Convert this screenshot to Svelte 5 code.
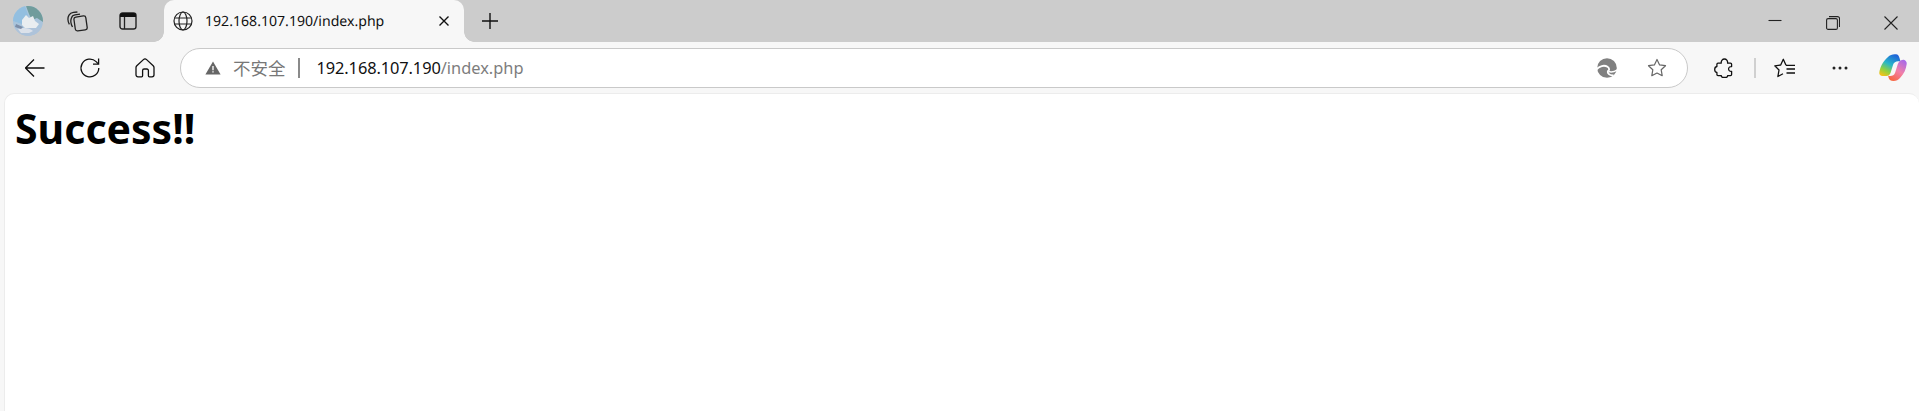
<script>
  const host = "192.168.107.190";
  const path = "/index.php";
</script>

<div class="window">
  <div class="tabstrip">
    <button class="avatar" aria-label="Profile">
      <svg width="30" height="30" viewBox="0 0 30 30">
        <defs>
          <clipPath id="av"><circle cx="15" cy="15" r="15" /></clipPath>
          <filter id="soft"><feGaussianBlur stdDeviation="0.7" /></filter>
        </defs>
        <g clip-path="url(#av)">
          <rect width="30" height="30" fill="#a9c4dc" />
          <g filter="url(#soft)">
            <path d="M0 0h12l3 9-6 9-9-3z" fill="#93bfe0" />
            <path d="M13 0h17v16l-6-4-5 2-3-6z" fill="#6f9c9c" />
            <path d="M9 14l4-5 3 3 4-2 2 5 4 3-3 4H12l-3-3z" fill="#e9edf0" />
            <path d="M0 22h30v8H0z" fill="#aec3da" />
            <path d="M5 23c5-2 12-1 15 2l-4 2H8z" fill="#dbe1ea" />
            <path d="M3 18l7 3-2 2-6-2z" fill="#7d8ea8" />
          </g>
        </g>
      </svg>
    </button>
    <button class="strip-btn first" aria-label="Workspaces">
      <svg width="22" height="22" viewBox="0 0 22 22" fill="none" stroke="#222" stroke-width="1.3">
        <rect x="8.500" y="6.500" width="12" height="14" rx="2.200" transform="rotate(-8 14 13)" />
        <path d="M6.500 17C4.800 14 4.400 10.500 5.400 8 6 6 7.400 5 9 4.800l5-.7" />
        <path d="M3.400 14.400C1.600 11 1.600 7.600 3 5.200 4 3.400 5.600 2.600 7.400 2.400l4-.4" />
      </svg>
    </button>
    <button class="strip-btn second" aria-label="Vertical tabs">
      <svg width="18" height="18" viewBox="0 0 18 18" fill="none">
        <rect x="1" y="1" width="16" height="16" rx="2.600" stroke="#222" stroke-width="1.400" />
        <path d="M1 3.600A2.600 2.600 0 0 1 3.600 1h10.800A2.600 2.600 0 0 1 17 3.600V5H1z" fill="#111" />
        <path d="M5.500 5v12" stroke="#222" stroke-width="1.300" />
      </svg>
    </button>
    <div class="tab">
      <svg class="globe" width="20" height="20" viewBox="0 0 20 20" fill="none" stroke="#222" stroke-width="1.200">
        <circle cx="10" cy="10" r="9" />
        <ellipse cx="10" cy="10" rx="4" ry="9" />
        <path d="M1.600 7h16.800M1.600 13h16.800" />
      </svg>
      <span class="tab-title">{host}{path}</span>
      <svg class="tab-close" width="12" height="12" viewBox="0 0 12 12" stroke="#111" stroke-width="1.400" fill="none">
        <path d="M1.500 1.500l9 9M10.500 1.500l-9 9" />
      </svg>
    </div>
    <button class="strip-btn plus" aria-label="New tab">
      <svg width="18" height="18" viewBox="0 0 18 18" stroke="#111" stroke-width="1.400" fill="none">
        <path d="M9 1v16M1 9h16" />
      </svg>
    </button>
    <div class="caption">
      <svg width="14" height="14" viewBox="0 0 14 14" stroke="#222" stroke-width="1.100" fill="none">
        <path d="M0.500 6.500h13" />
      </svg>
      <svg class="restore" width="14" height="14" viewBox="0 0 14 14" stroke="#222" stroke-width="1.100" fill="none">
        <rect x="0.600" y="2.600" width="10.800" height="10.800" rx="1.500" />
        <path d="M3 0.600h8.500a2 2 0 0 1 2 2V11" />
      </svg>
      <svg class="restore" width="14" height="14" viewBox="0 0 14 14" stroke="#222" stroke-width="1.100" fill="none">
        <path d="M0.500 0.500l13 13M13.500 0.500l-13 13" />
      </svg>
    </div>
  </div>

  <div class="toolbar">
    <svg class="back" width="20" height="20" viewBox="0 0 20 20" stroke="#111" stroke-width="1.300" fill="none">
      <path d="M0.500 10h19M9 1.500L0.500 10 9 18.500" />
    </svg>
    <svg class="reload" width="22" height="22" viewBox="0 0 22 22" stroke="#111" stroke-width="1.300" fill="none">
      <path d="M19.800 11a8.900 8.900 0 1 1-2.700-6.400l2.200 2.300" />
      <path d="M19.600 1.500v5.600H14" />
    </svg>
    <svg class="home" width="20" height="20" viewBox="0 0 20 20" stroke="#111" stroke-width="1.300" fill="none">
      <path d="M8.400 1.600a2.300 2.300 0 0 1 3.200 0l6.600 6.200c.5.500.8 1.100.8 1.800v7.200a2 2 0 0 1-2 2h-2.600a1 1 0 0 1-1-1v-5.300a1.500 1.500 0 0 0-1.500-1.500H9.100a1.500 1.500 0 0 0-1.500 1.500v5.300a1 1 0 0 1-1 1H3a2 2 0 0 1-2-2V9.600c0-.7.300-1.300.8-1.800z" />
    </svg>

    <div class="omnibox">
      <svg class="warn" width="16" height="14" viewBox="0 0 16 14">
        <path d="M8 0.500L15.600 13.500H0.400z" fill="#666" />
        <path d="M7.300 5h1.400v4.300H7.300zM7.300 10.200h1.400v1.400H7.300z" fill="#f7f7f7" />
      </svg>
      <span class="insecure">不安全</span>
      <span class="divider"></span>
      <span class="url"><span class="host">{host}</span><span class="path">{path}</span></span>
      <svg class="edge" width="20" height="20" viewBox="0 0 20 20" fill="none">
        <circle cx="10" cy="10" r="9.800" fill="#808080" />
        <path d="M-.5 11.500C2 7.800 7.500 6.800 10.500 8.800c2.200 1.500 2 3.500.5 4.200-.9 2.300 1.500 4.800 5.500 4.200" stroke="#fff" stroke-width="1.800" />
        <path d="M11.500 13.600c3 .9 6.200.2 9-1.800" stroke="#fff" stroke-width="1.600" />
      </svg>
      <svg class="star" width="20" height="20" viewBox="0 0 20 20" fill="none" stroke="#666" stroke-width="1.200">
        <path d="M10 1.500l2.600 5.400 5.900.8-4.300 4.100 1 5.900L10 15l-5.200 2.700 1-5.900L1.500 7.700l5.900-.8z" stroke-linejoin="round" />
      </svg>
    </div>

    <svg class="ext" width="20" height="20" viewBox="0 0 20 20" fill="none" stroke="#111" stroke-width="1.300">
      <path d="M4 5.200H7.200C7 2.600 8.600 1 10.400 1c1.900 0 3.500 1.600 3.200 4.200h2.900c.7 0 1.100.5 1.100 1.100v2.300c-1.800-.3-3 .9-3 2.400s1.200 2.700 3 2.400v3.100c0 .7-.4 1.100-1.100 1.100h-2.900c.3 1.400-1.300 1.900-3.100 1.900s-3.500-.5-3.200-1.900H4c-.7 0-1.100-.4-1.100-1.100v-2c-1.400-.2-2.200-1.500-2.200-3s.8-2.800 2.200-3V6.300c0-.6.400-1.100 1.100-1.100z" stroke-linejoin="round" />
    </svg>
    <span class="tool-sep"></span>
    <svg class="fav" width="22" height="20" viewBox="0 0 22 20" fill="none" stroke="#111" stroke-width="1.300">
      <path d="M12 7.300L9.300 1.300 6.700 7 .8 7.800 5 12l-1.100 6.500L9 15.800" stroke-linejoin="round" />
      <path d="M12 7.300h9M12.500 11H21M12.500 15H21" />
    </svg>
    <svg class="dots" width="16" height="4" viewBox="0 0 16 4" fill="#222">
      <circle cx="2" cy="2" r="1.500" /><circle cx="8" cy="2" r="1.500" /><circle cx="14" cy="2" r="1.500" />
    </svg>
    <svg class="copilot" width="28" height="27" viewBox="0 0 28 27">
      <defs>
        <linearGradient id="cpA" x1="0.700" y1="0" x2="0.200" y2="1">
          <stop offset="0" stop-color="#1f63d8" />
          <stop offset="0.450" stop-color="#27b6c9" />
          <stop offset="0.750" stop-color="#8fd13f" />
          <stop offset="1" stop-color="#f2c21b" />
        </linearGradient>
        <linearGradient id="cpB" x1="0.800" y1="0" x2="0.200" y2="1">
          <stop offset="0" stop-color="#a86ae8" />
          <stop offset="0.500" stop-color="#f27fa8" />
          <stop offset="1" stop-color="#f8663b" />
        </linearGradient>
      </defs>
      <path d="M9 3C11 .8 14 0 17 .3c2 .2 2.800 1.500 3.500 3.700l1 3.700c-3.500-1-6.500.3-7.500 3.300l-2.500 8c-.8 2-2 3-4 3H3.500C1.500 22 0 20.500.3 18.500 1 14 3 8 9 3z" fill="url(#cpA)" />
      <path d="M25.500 6c1.500.8 2.500 2.300 2.200 4-.6 5-2.700 10-6.700 14-1.700 1.900-3.700 3-6.500 3-2.500 0-4.300-1-4.800-3l-.6-2.200c3.500.7 6-.2 7-3l2.500-8c.6-2.300 3.300-6 6.900-4.800z" fill="url(#cpB)" />
    </svg>
  </div>

  <main class="page">
    <h1>Success!!</h1>
  </main>
</div>

<style>
  :global(body) {
    margin: 0;
    overflow: hidden;
    background: #f7f7f7;
  }
  .window {
    width: 1919px;
    height: 411px;
    display: flex;
    flex-direction: column;
    font-family: "Noto Sans", "Noto Sans CJK SC", sans-serif;
  }
  button {
    border: 0;
    padding: 0;
    background: none;
    display: flex;
    align-items: center;
    justify-content: center;
  }

  /* tab strip */
  .tabstrip {
    height: 42px;
    background: #cccccc;
    display: flex;
    align-items: center;
    flex: none;
  }
  .avatar {
    margin-left: 13px;
    width: 30px;
    height: 30px;
  }
  .strip-btn.first {
    margin-left: 23px;
  }
  .strip-btn.second {
    margin-left: 31px;
  }
  .tab {
    position: relative;
    margin-left: 27px;
    width: 300px;
    height: 42px;
    box-sizing: border-box;
    padding: 0 14px 0 9px;
    background: #f7f7f7;
    border-radius: 10px 10px 0 0;
    display: flex;
    align-items: center;
    color: #111;
  }
  .tab::before,
  .tab::after {
    content: "";
    position: absolute;
    bottom: 0;
    width: 10px;
    height: 10px;
    background: radial-gradient(circle at 0 0, #cccccc 9.500px, #f7f7f7 10px);
  }
  .tab::before {
    left: -10px;
  }
  .tab::after {
    right: -10px;
    transform: scaleX(-1);
  }
  .tab-title {
    margin-left: 12px;
    font-size: 14.100px;
    text-rendering: geometricPrecision;
    white-space: nowrap;
    flex: 1;
  }
  .strip-btn.plus {
    margin-left: 17px;
  }
  .caption {
    margin-left: auto;
    margin-right: 21px;
    display: flex;
    align-items: center;
    gap: 44px;
  }
  .restore {
    margin-top: 3px;
  }

  /* toolbar */
  .toolbar {
    height: 51px;
    flex: none;
    display: flex;
    align-items: center;
    background: #f7f7f7;
  }
  .back {
    margin-left: 25px;
  }
  .reload {
    margin-left: 34px;
  }
  .home {
    margin-left: 34px;
  }
  .omnibox {
    margin-left: 25px;
    width: 1508px;
    height: 40px;
    box-sizing: border-box;
    border: 1px solid #c9c9c9;
    border-radius: 20px;
    background: #fff;
    display: flex;
    align-items: center;
    padding-left: 24px;
    margin-top: 1px;
  }
  .insecure {
    margin-left: 12px;
    margin-bottom: 2px;
    font-size: 17.500px;
    color: #777;
  }
  .divider {
    width: 2px;
    height: 20px;
    background: #8a8a8a;
    margin-left: 12px;
  }
  .url {
    margin-left: 17px;
    margin-bottom: 2px;
    font-size: 16.400px;
    white-space: nowrap;
    flex: 1;
  }
  .host {
    color: #111;
    letter-spacing: -0.1px;
  }
  .path {
    color: #7d7d7d;
  }
  .edge {
    margin-right: 30px;
  }
  .star {
    margin-right: 20px;
  }
  .ext {
    margin-left: 26px;
  }
  .tool-sep {
    width: 2px;
    height: 20px;
    background: #d0d0d0;
    margin-left: 20px;
  }
  .fav {
    margin-left: 18px;
  }
  .dots {
    margin-left: 36px;
  }
  .copilot {
    margin-left: 31px;
  }

  /* page */
  .page {
    flex: 1;
    margin-left: 4px;
    background: #fff;
    border: 1px solid #ececec;
    border-bottom: 0;
    border-right: 0;
    border-radius: 10px 10px 0 0;
    box-sizing: border-box;
    padding: 8px 0 0 10px;
  }
  h1 {
    margin: 0;
    font-size: 41px;
    font-weight: 700;
    line-height: 52px;
    color: #000;
  }
</style>
